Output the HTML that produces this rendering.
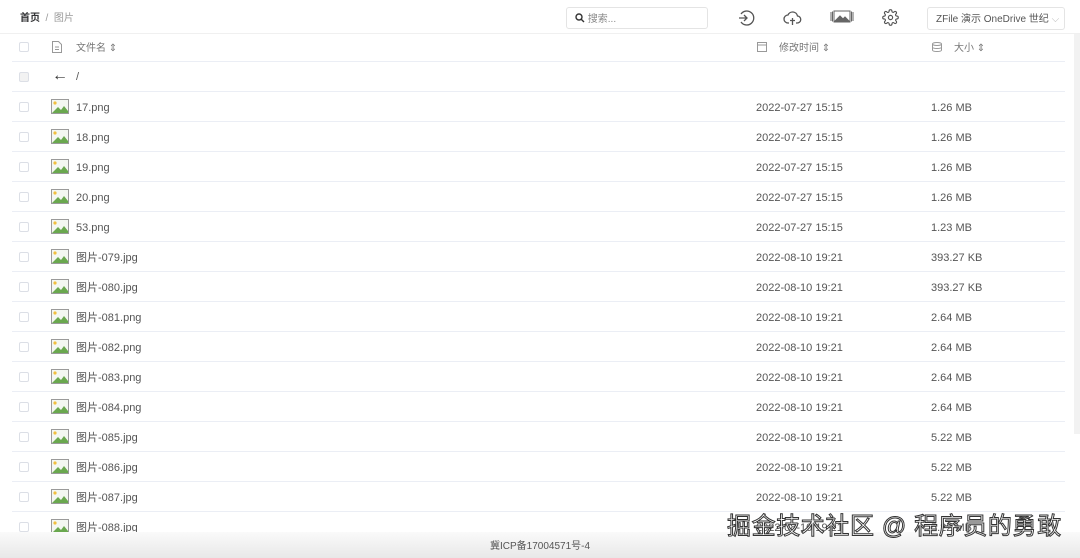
<!DOCTYPE html>
<html><head><meta charset="utf-8"><style>
*{margin:0;padding:0;box-sizing:border-box}
body{width:1080px;height:558px;overflow:hidden;background:#fff;font-family:"Liberation Sans","Noto Sans CJK SC",sans-serif;color:#606266;font-size:11px;position:relative;line-height:13px}
span,div{line-height:13px}
.top{height:34px;position:relative;border-bottom:1px solid #f0f0f0}
.bc{position:absolute;left:20px;top:12px;font-size:10px;color:#999}
.bc b{color:#303133;font-weight:bold}
.search{position:absolute;left:566px;top:7px;width:142px;height:22px;border:1px solid #e4e4e4;border-radius:3px;font-size:10px;color:#888;padding:5px 0 0 8px}
.sel{position:absolute;left:927px;top:7px;width:138px;height:23px;border:1px solid #e4e4e4;border-radius:3px;font-size:10px;color:#555;padding:5px 0 0 8px;white-space:nowrap;overflow:hidden}
.ic{position:absolute;top:9px}
.row{position:absolute;left:12px;width:1053px;height:30px;border-bottom:1px solid #ebeef5}
.cb{position:absolute;left:7px;top:10px;width:10px;height:10px;border:1px solid #dcdfe6;border-radius:2px;background:#fff}
.name{position:absolute;left:64px;top:10px;color:#555}
.time{position:absolute;left:744px;top:10px;color:#555}
.size{position:absolute;left:919px;top:10px;color:#555}
.img{position:absolute;left:39px;top:7px}
.hd{color:#777;font-size:10px;top:8px}
.footer{position:absolute;left:0;top:532px;width:1080px;height:26px;background:linear-gradient(#fafafa,#e8e8e8);text-align:center;font-size:10px;color:#555;padding-top:8px}
.wm{position:absolute;left:727px;top:513px;font-size:24px;line-height:28px;color:#fff;-webkit-text-stroke:1px #333;white-space:nowrap;letter-spacing:0.6px}
.sb{position:absolute;left:1074px;top:34px;width:6px;height:400px;background:#f2f2f2}
</style></head><body>
<div class="top">
<div class="bc"><b>首页</b> &nbsp;/&nbsp; 图片</div>
<div class="search"><svg width="10" height="10" viewBox="0 0 10 10" style="vertical-align:-1px"><circle cx="4" cy="4" r="3" fill="none" stroke="#333" stroke-width="1.4"/><path d="M6.2 6.2L9 9" stroke="#333" stroke-width="1.4"/></svg> 搜索...</div>
<svg class="ic" style="left:737px" width="18" height="18" viewBox="0 0 18 18" fill="none" stroke="#555" stroke-width="1.3"><path d="M4 5A7 7 0 1 1 4 13"/><path d="M2 9h8M7 6l3 3-3 3"/></svg>
<svg class="ic" style="left:783px" width="19" height="18" viewBox="0 0 19 18" fill="none" stroke="#555" stroke-width="1.3"><path d="M6 14H5a4 4 0 0 1 0-8 5 5 0 0 1 9.5 1A3.5 3.5 0 0 1 14 14h-1"/><path d="M9.5 9v7M7 11.5h5"/></svg>
<svg class="ic" style="left:830px" width="24" height="16" viewBox="0 0 24 16" fill="none" stroke="#666" stroke-width="1"><rect x="4" y="2" width="16" height="11"/><path d="M1 3v9M23 3v9M2.5 2.5v10M21.5 2.5v10"/><path d="M5 12l5-5 3 3 2-2 4 4z" fill="#666"/></svg>
<svg class="ic" style="left:882px" width="17" height="17" viewBox="0 0 24 24" fill="none" stroke="#555" stroke-width="1.6"><circle cx="12" cy="12" r="3"/><path d="M19.4 15a1.7 1.7 0 0 0 .3 1.8l.1.1a2 2 0 1 1-2.8 2.8l-.1-.1a1.7 1.7 0 0 0-1.8-.3 1.7 1.7 0 0 0-1 1.5V21a2 2 0 1 1-4 0v-.1a1.7 1.7 0 0 0-1.1-1.5 1.7 1.7 0 0 0-1.8.3l-.1.1a2 2 0 1 1-2.8-2.8l.1-.1a1.7 1.7 0 0 0 .3-1.8 1.7 1.7 0 0 0-1.5-1H3a2 2 0 1 1 0-4h.1a1.7 1.7 0 0 0 1.5-1.1 1.7 1.7 0 0 0-.3-1.8l-.1-.1a2 2 0 1 1 2.8-2.8l.1.1a1.7 1.7 0 0 0 1.8.3H9a1.7 1.7 0 0 0 1-1.5V3a2 2 0 1 1 4 0v.1a1.7 1.7 0 0 0 1 1.5 1.7 1.7 0 0 0 1.8-.3l.1-.1a2 2 0 1 1 2.8 2.8l-.1.1a1.7 1.7 0 0 0-.3 1.8V9a1.7 1.7 0 0 0 1.5 1H21a2 2 0 1 1 0 4h-.1a1.7 1.7 0 0 0-1.5 1z"/></svg>
<div class="sel">ZFile 演示 OneDrive 世纪 <span style="color:#bbb">⌵</span></div>
</div>
<div class="sb"></div>
<div id="t"></div>
<div class="footer">冀ICP备17004571号-4</div>
<div class="wm">掘金技术社区 @ 程序员的勇敢</div>
<script>
var rows=[["17.png","2022-07-27 15:15","1.26 MB"],["18.png","2022-07-27 15:15","1.26 MB"],["19.png","2022-07-27 15:15","1.26 MB"],["20.png","2022-07-27 15:15","1.26 MB"],["53.png","2022-07-27 15:15","1.23 MB"],["图片-079.jpg","2022-08-10 19:21","393.27 KB"],["图片-080.jpg","2022-08-10 19:21","393.27 KB"],["图片-081.png","2022-08-10 19:21","2.64 MB"],["图片-082.png","2022-08-10 19:21","2.64 MB"],["图片-083.png","2022-08-10 19:21","2.64 MB"],["图片-084.png","2022-08-10 19:21","2.64 MB"],["图片-085.jpg","2022-08-10 19:21","5.22 MB"],["图片-086.jpg","2022-08-10 19:21","5.22 MB"],["图片-087.jpg","2022-08-10 19:21","5.22 MB"],["图片-088.jpg","2022-08-10 19:21","5.22 MB"]];
var img='<svg class="img" width="18" height="15" viewBox="0 0 18 15"><rect x="0.5" y="0.5" width="17" height="14" fill="#f4f7f2" stroke="#9a9a9a"/><circle cx="4" cy="4" r="1.6" fill="#f0c040"/><path d="M1 14L7 8l3 3 3-4 4 5v2z" fill="#6aa84f"/></svg>';
var h='<div class="row" style="top:34px;height:28px"><div class="cb" style="top:8px"></div><svg style="position:absolute;left:40px;top:7px" width="10" height="12" viewBox="0 0 10 12" fill="none" stroke="#999"><path d="M.5.5h6l3 3v8h-9z M3 6h4M3 8.5h4"/></svg><span class="name hd">文件名 ⇕</span><svg style="position:absolute;left:745px;top:8px" width="10" height="10" fill="none" stroke="#999"><rect x=".5" y=".5" width="9" height="9"/><path d="M.5 3h9"/></svg><span class="time hd" style="left:767px">修改时间 ⇕</span><svg style="position:absolute;left:920px;top:8px" width="10" height="10" fill="none" stroke="#999"><ellipse cx="5" cy="2" rx="4.5" ry="1.5"/><path d="M.5 2v6c0 2 9 2 9 0V2M.5 5c0 2 9 2 9 0"/></svg><span class="size hd" style="left:942px">大小 ⇕</span></div>';
h+='<div class="row" style="top:62px"><div class="cb" style="background:#f2f2f2"></div><span style="position:absolute;left:40px;top:7px;font-size:16px;color:#333">←</span><span class="name" style="top:9px">/</span></div>';
rows.forEach(function(r,i){h+='<div class="row" style="top:'+(92+i*30)+'px"><div class="cb"></div>'+img+'<span class="name">'+r[0]+'</span><span class="time">'+r[1]+'</span><span class="size">'+r[2]+'</span></div>';});
document.getElementById('t').innerHTML=h;
</script>
</body></html>
